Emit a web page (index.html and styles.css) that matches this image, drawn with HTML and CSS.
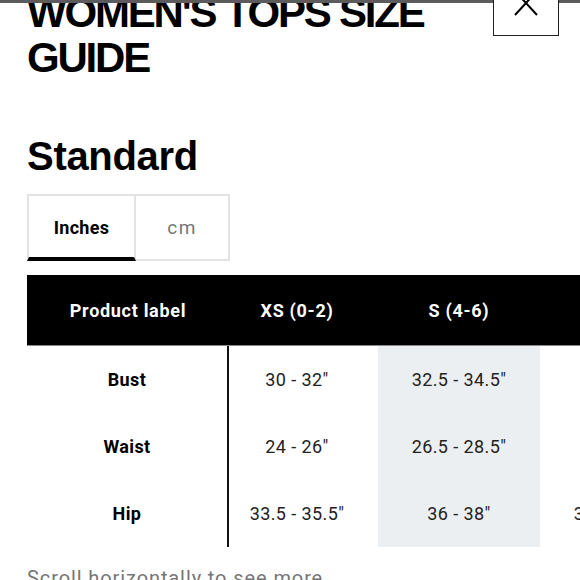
FILE: index.html
```html
<!DOCTYPE html>
<html lang="en">
<head>
<meta charset="utf-8">
<title>Women's tops size guide</title>
<link rel="stylesheet" href="styles.css">
</head>
<body>
<div class="topbar"></div>
<button class="close" aria-label="Close">
  <svg width="24" height="26" viewBox="0 0 24 26"><path d="M1 1 L23 25 M23 1 L1 25" stroke="#000" stroke-width="2" fill="none"/></svg>
</button>
<main class="page">
  <h1 class="title">Women's tops size guide</h1>
  <h2 class="subtitle">Standard</h2>
  <div class="tabs">
    <button class="tab tab-inches active">Inches</button>
    <button class="tab tab-cm">cm</button>
  </div>
  <div class="table-wrap">
    <div class="size-grid" role="table">
      <div class="cell head c1">Product label</div>
      <div class="cell head c2">XS (0-2)</div>
      <div class="cell head c3">S (4-6)</div>
      <div class="cell head c4">M (8-10)</div>
      <div class="cell head c5">L (12-14)</div>
      <div class="cell head c6">XL (16-18)</div>

      <div class="cell label c1">Bust</div>
      <div class="cell c2">30 - 32″</div>
      <div class="cell c3 hl">32.5 - 34.5″</div>
      <div class="cell c4">35 - 37″</div>
      <div class="cell c5">38 - 40″</div>
      <div class="cell c6">41 - 43″</div>

      <div class="cell label c1">Waist</div>
      <div class="cell c2">24 - 26″</div>
      <div class="cell c3 hl">26.5 - 28.5″</div>
      <div class="cell c4">29 - 31″</div>
      <div class="cell c5">32 - 34″</div>
      <div class="cell c6">35 - 37″</div>

      <div class="cell label c1">Hip</div>
      <div class="cell c2">33.5 - 35.5″</div>
      <div class="cell c3 hl">36 - 38″</div>
      <div class="cell c4">38.5 - 40.5″</div>
      <div class="cell c5">41 - 43″</div>
      <div class="cell c6">44 - 46″</div>
    </div>
  </div>
  <p class="hint">Scroll horizontally to see more</p>
</main>
</body>
</html>
```

FILE: styles.css
```css
html, body {
  margin: 0;
  padding: 0;
  background: #fff;
  overflow: hidden;
  height: 580px;
}

body {
  font-family: Roboto, "Liberation Sans", sans-serif;
  color: #000;
}

.topbar {
  position: absolute;
  left: 0;
  top: 0;
  width: 100%;
  height: 3px;
  background: #5c5c5c;
  z-index: 1;
}

.close {
  position: absolute;
  top: -31px;
  right: 21px;
  width: 66px;
  height: 67px;
  padding: 0;
  background: #fff;
  border: 1px solid #222;
  display: flex;
  align-items: center;
  justify-content: center;
  z-index: 2;
}

.close svg {
  display: block;
}

.page {
  padding-left: 27px;
}

.title {
  margin: -10px 0 0 0;
  font-family: "Liberation Sans", Arial, sans-serif;
  font-weight: 700;
  font-size: 42px;
  line-height: 45px;
  letter-spacing: -2.2px;
  text-transform: uppercase;
  width: 420px;
}

.subtitle {
  margin: 54px 0 0 0;
  font-family: "Liberation Sans", Arial, sans-serif;
  font-weight: 700;
  font-size: 40px;
  line-height: 44px;
  letter-spacing: -0.3px;
}

.tabs {
  display: flex;
  margin-top: 16px;
}

.tab {
  height: 67px;
  box-sizing: border-box;
  border: 2px solid #e3e3e3;
  background: #fff;
  font-family: Roboto, "Liberation Sans", sans-serif;
  font-size: 18px;
  padding: 0;
  margin: 0;
}

.tab-inches {
  width: 109px;
  font-weight: 700;
  color: #000;
  letter-spacing: 0.3px;
}

.tab-inches.active {
  border-bottom: 4px solid #000;
  padding-top: 2px;
}

.tab-cm {
  width: 94px;
  border-left: 0;
  color: #767677;
  font-size: 19px;
  letter-spacing: 1.5px;
}

.table-wrap {
  margin-top: 14px;
  overflow: hidden;
}

.size-grid {
  display: grid;
  grid-template-columns: 202px 149px 162px 162px 162px 162px;
  grid-template-rows: 71px 67px 67px 67px;
  width: max-content;
}

.cell {
  display: flex;
  align-items: center;
  justify-content: center;
  font-size: 18px;
  letter-spacing: 0.4px;
  color: #222;
  box-sizing: border-box;
}

.head {
  background: #000;
  color: #fff;
  font-weight: 700;
  letter-spacing: 0.7px;
  border-bottom: 1px solid #8a8a8a;
  padding-top: 1px;
}

.label {
  font-weight: 700;
  color: #000;
}

.label.c1 {
  border-right: 2px solid #111;
}

.c2 {
  padding-right: 13px;
}

.hl {
  background: #eceff1;
}

.hint {
  margin: 20px 0 0 0;
  font-size: 20px;
  line-height: 22px;
  letter-spacing: 0.9px;
  color: #767677;
}
```
